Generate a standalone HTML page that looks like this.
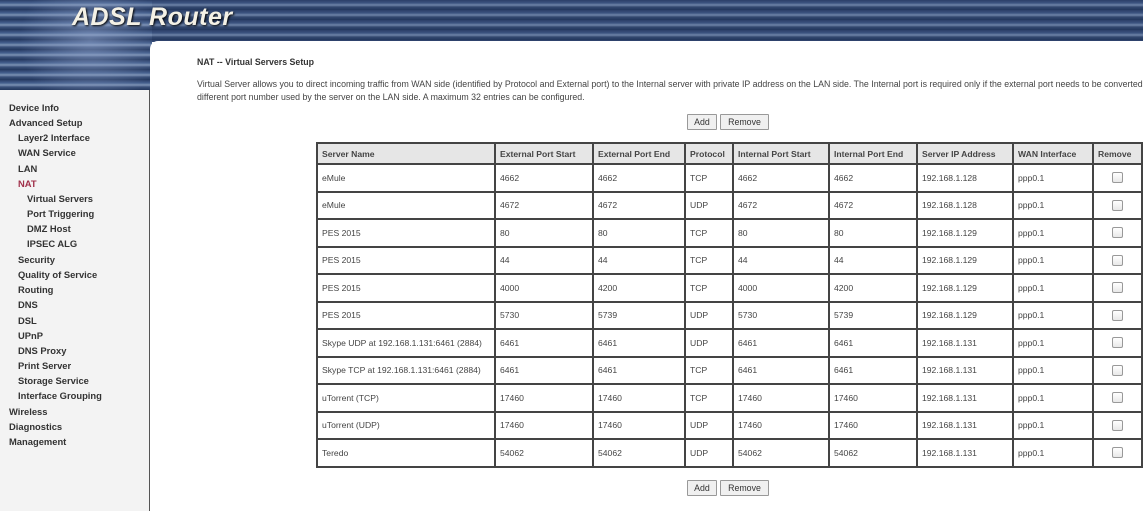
<!DOCTYPE html>
<html><head><meta charset="utf-8"><style>
*{margin:0;padding:0;box-sizing:border-box}
body{width:1143px;height:511px;overflow:hidden;background:#fff;font-family:"Liberation Sans",Tahoma,sans-serif;position:relative}
#hdr{position:absolute;left:0;top:0;width:1143px;height:42px;background:repeating-linear-gradient(180deg,#2b3f68 0px,#3c5480 3px,#6f84a8 5px,#33486f 7px,#22365c 10px)}
#hdrl{position:absolute;left:0;top:0;width:152px;height:90px;background:radial-gradient(circle at 90px 40px,rgba(150,170,210,0.5) 0,rgba(150,170,210,0) 70px),repeating-linear-gradient(180deg,#2b3f68 0px,#45608e 3px,#7d92b4 5px,#3a5079 7px,#22365c 10px)}
#logo{position:absolute;left:72px;top:3px;font:italic bold 25px "Liberation Sans",sans-serif;color:#f4f1e6;text-shadow:1px 1px 2px #000;letter-spacing:0.5px}
#side{position:absolute;left:0;top:90px;width:150px;height:421px;background:#f3f3f3;border-right:1px solid #555}
#content{position:absolute;left:150px;top:41px;width:993px;height:470px;background:#fff;border-top-left-radius:8px}
.m{position:absolute;font-size:9.4px;font-weight:bold;color:#333;white-space:nowrap}
.t{position:absolute;font-size:8.8px;color:#444;white-space:nowrap}
.btn{position:absolute;height:16px;border:1px solid #999;background:#f0f0f0;font-size:8.8px;color:#333;text-align:center;line-height:14px;border-radius:1px}
table{position:absolute;left:316px;top:142px;border:1px solid #444;border-spacing:0;table-layout:fixed;width:825px}
td,th{border:1px solid #444;font-size:8.6px;color:#444;text-align:left;padding-left:4px;height:27.5px;white-space:nowrap;font-weight:normal}
th{background:#e6e6e6;font-weight:bold;height:21px;color:#444}
td.c{text-align:center;padding:0}
.cb{display:inline-block;width:11px;height:11px;border:1px solid #999;border-radius:2px;background:linear-gradient(#fff,#e8e8e8);vertical-align:middle}
</style></head><body>
<div id="hdr"></div><div id="hdrl"></div>
<div id="logo">ADSL Router</div>
<div id="side"></div>
<div id="content"></div>
<div class="m" style="left:9px;top:102px">Device Info</div>
<div class="m" style="left:9px;top:117px">Advanced Setup</div>
<div class="m" style="left:18px;top:132px">Layer2 Interface</div>
<div class="m" style="left:18px;top:147px">WAN Service</div>
<div class="m" style="left:18px;top:163px">LAN</div>
<div class="m" style="left:18px;top:178px;color:#a0304a">NAT</div>
<div class="m" style="left:27px;top:193px">Virtual Servers</div>
<div class="m" style="left:27px;top:208px">Port Triggering</div>
<div class="m" style="left:27px;top:223px">DMZ Host</div>
<div class="m" style="left:27px;top:238px">IPSEC ALG</div>
<div class="m" style="left:18px;top:254px">Security</div>
<div class="m" style="left:18px;top:269px">Quality of Service</div>
<div class="m" style="left:18px;top:284px">Routing</div>
<div class="m" style="left:18px;top:299px">DNS</div>
<div class="m" style="left:18px;top:315px">DSL</div>
<div class="m" style="left:18px;top:330px">UPnP</div>
<div class="m" style="left:18px;top:345px">DNS Proxy</div>
<div class="m" style="left:18px;top:360px">Print Server</div>
<div class="m" style="left:18px;top:375px">Storage Service</div>
<div class="m" style="left:18px;top:390px">Interface Grouping</div>
<div class="m" style="left:9px;top:406px">Wireless</div>
<div class="m" style="left:9px;top:421px">Diagnostics</div>
<div class="m" style="left:9px;top:436px">Management</div>

<div class="t" style="left:197px;top:57px;font-weight:bold;color:#333">NAT -- Virtual Servers Setup</div>
<div class="t" style="left:197px;top:79px">Virtual Server allows you to direct incoming traffic from WAN side (identified by Protocol and External port) to the Internal server with private IP address on the LAN side. The Internal port is required only if the external port needs to be converted to a</div>
<div class="t" style="left:197px;top:92px">different port number used by the server on the LAN side. A maximum 32 entries can be configured.</div>
<div class="btn" style="left:687px;top:114px;width:30px">Add</div>
<div class="btn" style="left:720px;top:114px;width:49px">Remove</div>
<div class="btn" style="left:687px;top:480px;width:30px">Add</div>
<div class="btn" style="left:720px;top:480px;width:49px">Remove</div>

<table>
<colgroup><col style="width:178px"><col style="width:98px"><col style="width:92px"><col style="width:48px"><col style="width:96px"><col style="width:88px"><col style="width:96px"><col style="width:80px"><col style="width:49px"></colgroup>
<tr><th>Server Name</th><th>External Port Start</th><th>External Port End</th><th>Protocol</th><th>Internal Port Start</th><th>Internal Port End</th><th>Server IP Address</th><th>WAN Interface</th><th>Remove</th></tr>
<tr><td>eMule</td><td>4662</td><td>4662</td><td>TCP</td><td>4662</td><td>4662</td><td>192.168.1.128</td><td>ppp0.1</td><td class="c"><span class="cb"></span></td></tr>
<tr><td>eMule</td><td>4672</td><td>4672</td><td>UDP</td><td>4672</td><td>4672</td><td>192.168.1.128</td><td>ppp0.1</td><td class="c"><span class="cb"></span></td></tr>
<tr><td>PES 2015</td><td>80</td><td>80</td><td>TCP</td><td>80</td><td>80</td><td>192.168.1.129</td><td>ppp0.1</td><td class="c"><span class="cb"></span></td></tr>
<tr><td>PES 2015</td><td>44</td><td>44</td><td>TCP</td><td>44</td><td>44</td><td>192.168.1.129</td><td>ppp0.1</td><td class="c"><span class="cb"></span></td></tr>
<tr><td>PES 2015</td><td>4000</td><td>4200</td><td>TCP</td><td>4000</td><td>4200</td><td>192.168.1.129</td><td>ppp0.1</td><td class="c"><span class="cb"></span></td></tr>
<tr><td>PES 2015</td><td>5730</td><td>5739</td><td>UDP</td><td>5730</td><td>5739</td><td>192.168.1.129</td><td>ppp0.1</td><td class="c"><span class="cb"></span></td></tr>
<tr><td>Skype UDP at 192.168.1.131:6461 (2884)</td><td>6461</td><td>6461</td><td>UDP</td><td>6461</td><td>6461</td><td>192.168.1.131</td><td>ppp0.1</td><td class="c"><span class="cb"></span></td></tr>
<tr><td>Skype TCP at 192.168.1.131:6461 (2884)</td><td>6461</td><td>6461</td><td>TCP</td><td>6461</td><td>6461</td><td>192.168.1.131</td><td>ppp0.1</td><td class="c"><span class="cb"></span></td></tr>
<tr><td>uTorrent (TCP)</td><td>17460</td><td>17460</td><td>TCP</td><td>17460</td><td>17460</td><td>192.168.1.131</td><td>ppp0.1</td><td class="c"><span class="cb"></span></td></tr>
<tr><td>uTorrent (UDP)</td><td>17460</td><td>17460</td><td>UDP</td><td>17460</td><td>17460</td><td>192.168.1.131</td><td>ppp0.1</td><td class="c"><span class="cb"></span></td></tr>
<tr><td>Teredo</td><td>54062</td><td>54062</td><td>UDP</td><td>54062</td><td>54062</td><td>192.168.1.131</td><td>ppp0.1</td><td class="c"><span class="cb"></span></td></tr>
</table>
</body></html>
